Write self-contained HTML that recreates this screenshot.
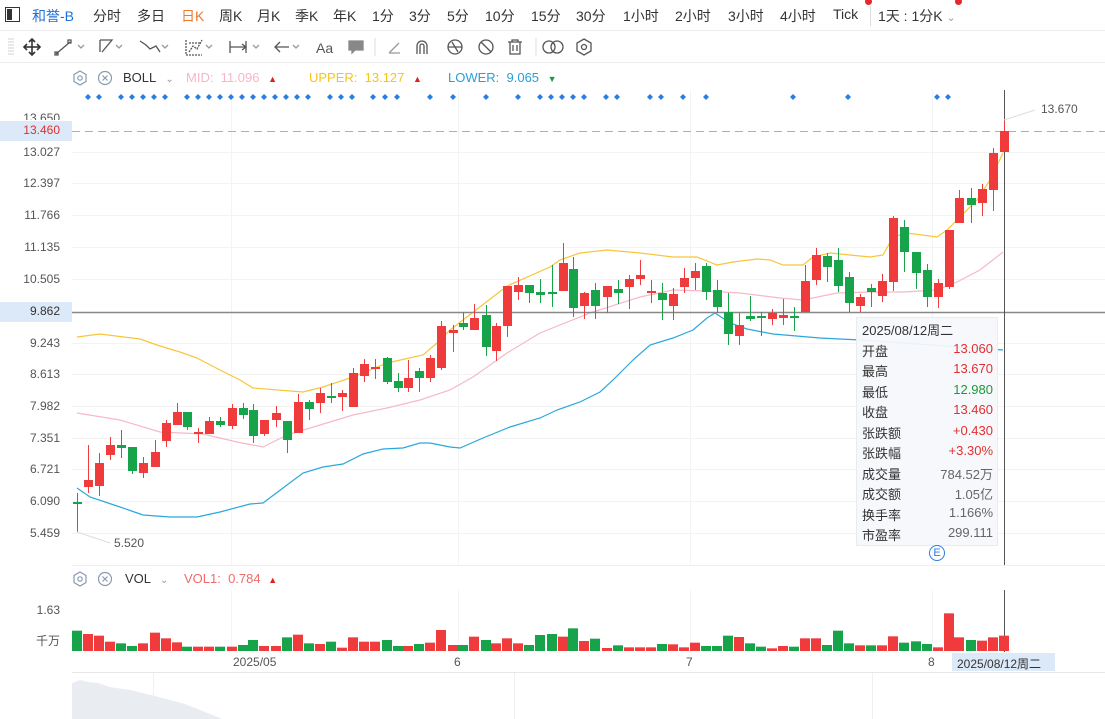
<!DOCTYPE html>
<html><head><meta charset="utf-8">
<style>
*{margin:0;padding:0;box-sizing:border-box}
body{width:1105px;height:719px;overflow:hidden;background:#fff;font-family:"Liberation Sans","Noto Sans CJK SC",sans-serif;color:#333;position:relative}
.a{position:absolute;white-space:nowrap}
.nav{font-size:14px;top:6px;color:#333}
.ax{font-size:12px;color:#555;text-align:right;width:60px;left:0}
.tt{position:absolute;left:856px;top:317px;width:142px;height:229px;background:rgba(246,248,251,0.93);border:1px solid #e8ecf1;font-size:13px}
.tt div{position:absolute;left:5px;right:4px;height:20px}
.tt span{position:absolute;right:0}
</style></head><body>
<!-- top nav -->
<div class="a" style="left:5px;top:7px;width:15px;height:15px;border:1.5px solid #333"></div>
<div class="a" style="left:7px;top:9px;width:5px;height:11px;background:#333"></div>
<div class="a nav" style="left:32px;color:#1e6fd9">和誉-B</div>
<div class="a nav" style="left:93px">分时</div>
<div class="a nav" style="left:137px">多日</div>
<div class="a nav" style="left:181px;color:#f0782d">日K</div>
<div class="a nav" style="left:219px">周K</div>
<div class="a nav" style="left:257px">月K</div>
<div class="a nav" style="left:295px">季K</div>
<div class="a nav" style="left:333px">年K</div>
<div class="a nav" style="left:372px">1分</div>
<div class="a nav" style="left:409px">3分</div>
<div class="a nav" style="left:447px">5分</div>
<div class="a nav" style="left:485px">10分</div>
<div class="a nav" style="left:531px">15分</div>
<div class="a nav" style="left:576px">30分</div>
<div class="a nav" style="left:623px">1小时</div>
<div class="a nav" style="left:675px">2小时</div>
<div class="a nav" style="left:728px">3小时</div>
<div class="a nav" style="left:780px">4小时</div>
<div class="a nav" style="left:833px">Tick</div>
<div class="a" style="left:865px;top:-2px;width:7px;height:7px;border-radius:50%;background:#e8262b"></div>
<div class="a" style="left:870px;top:6px;width:1px;height:20px;background:#ddd"></div>
<div class="a nav" style="left:878px">1天 : 1分K <span style="color:#8aa0c0;font-size:11px">⌄</span></div>
<div class="a" style="left:955px;top:-2px;width:7px;height:7px;border-radius:50%;background:#e8262b"></div>
<div class="a" style="left:0;top:30px;width:1105px;height:1px;background:#ececec"></div>
<div class="a" style="left:0;top:62px;width:1105px;height:1px;background:#ececec"></div>
<!-- toolbar -->
<svg class="a" style="left:0;top:32px" width="620" height="30" fill="none" stroke="#555" stroke-width="1.3">
<g stroke="#ddd"><line x1="8" y1="7" x2="14" y2="7"/><line x1="8" y1="10" x2="14" y2="10"/><line x1="8" y1="13" x2="14" y2="13"/><line x1="8" y1="16" x2="14" y2="16"/><line x1="8" y1="19" x2="14" y2="19"/><line x1="8" y1="22" x2="14" y2="22"/></g>
<g stroke="#333" stroke-width="1.6"><line x1="24" y1="15" x2="40" y2="15"/><line x1="32" y1="7" x2="32" y2="23"/><path d="M29 10l3-3 3 3M29 20l3 3 3-3M27 12l-3 3 3 3M37 12l3 3-3 3"/></g>
<path d="M56 22l14-12M55 20h3v3h-3zM68 8h3v3h-3z"/><path d="M78 13l3 3 3-3" stroke="#999"/>
<path d="M100 8h12l-10 12M100 8v12" /><path d="M116 13l3 3 3-3" stroke="#999"/>
<path d="M140 9l6 4 4 4 6-3 4 6"/><path d="M162 13l3 3 3-3" stroke="#999"/>
<path d="M186 8v15h16M189 20l4-6 4 3 5-9M189 11h12" stroke-dasharray="2 1"/><path d="M206 13l3 3 3-3" stroke="#999"/>
<path d="M230 9v12M246 9v12M230 15h16M242 12l4 3-4 3"/><path d="M253 13l3 3 3-3" stroke="#999"/>
<path d="M275 15h14M280 10l-5 5 5 5"/><path d="M293 13l3 3 3-3" stroke="#999"/>
<text x="316" y="21" font-size="14" fill="#555" stroke="none" font-family="Liberation Sans">Aa</text>
<path d="M349 9h14v9h-8l-3 3v-3h-3z" fill="#888" stroke="#888"/>
<line x1="375" y1="6" x2="375" y2="24" stroke="#e4e4e4"/>
<path d="M389 21l10-10M389 21h11" stroke="#999"/>
<path d="M417 22v-8a5 5 0 0110 0v8M420 22v-8a2 2 0 014 0v8"/>
<circle cx="455" cy="15" r="7"/><path d="M448 15h14M452 10l6 10"/>
<circle cx="486" cy="15" r="7"/><path d="M481 10l10 10"/>
<path d="M508 10h14M512 10V8h6v2M510 10v12h10V10M513 13v6M517 13v6"/>
<line x1="536" y1="6" x2="536" y2="24" stroke="#e4e4e4"/>
<circle cx="549" cy="15" r="6"/><circle cx="557" cy="15" r="6"/>
<path d="M584 7l7 4v8l-7 4-7-4v-8z"/><circle cx="584" cy="15" r="2.5"/>
</svg>
<!-- BOLL legend -->
<svg class="a" style="left:72px;top:70px" width="40" height="16" fill="none" stroke="#8a9bb0" stroke-width="1.2">
<path d="M8 1l6 3.5v7L8 15l-6-3.5v-7z"/><circle cx="8" cy="8" r="2.2"/><circle cx="33" cy="8" r="6.5"/><path d="M30.5 5.5l5 5M35.5 5.5l-5 5"/></svg>
<div class="a" style="left:123px;top:70px;font-size:13px">BOLL <span style="color:#999;font-size:10px;margin-left:6px">⌄</span></div>
<div class="a" style="left:186px;top:70px;font-size:13px;color:#f7b6c8">MID:&nbsp; 11.096 <span style="color:#e02020;font-size:9px;margin-left:5px">▲</span></div>
<div class="a" style="left:309px;top:70px;font-size:13px;color:#f5c518">UPPER:&nbsp; 13.127 <span style="color:#e02020;font-size:9px;margin-left:5px">▲</span></div>
<div class="a" style="left:448px;top:70px;font-size:13px;color:#2a9fd6">LOWER:&nbsp; 9.065 <span style="color:#1a9a3a;font-size:9px;margin-left:5px">▼</span></div>
<!-- axis labels -->
<div class="a ax" style="top:111px;height:9px;overflow:hidden">13.650</div>
<div class="a" style="left:0;top:121px;width:72px;height:20px;background:#dce9f8"></div>
<div class="a ax" style="top:123px;color:#e0302f">13.460</div>
<div class="a ax" style="top:145px">13.027</div>
<div class="a ax" style="top:176px">12.397</div>
<div class="a ax" style="top:208px">11.766</div>
<div class="a ax" style="top:240px">11.135</div>
<div class="a ax" style="top:272px">10.505</div>
<div class="a" style="left:0;top:302px;width:72px;height:20px;background:#dce9f8"></div>
<div class="a ax" style="top:304px;color:#333">9.862</div>
<div class="a ax" style="top:336px">9.243</div>
<div class="a ax" style="top:367px">8.613</div>
<div class="a ax" style="top:399px">7.982</div>
<div class="a ax" style="top:431px">7.351</div>
<div class="a ax" style="top:462px">6.721</div>
<div class="a ax" style="top:494px">6.090</div>
<div class="a ax" style="top:526px">5.459</div>
<svg id="main" class="a" style="left:0;top:0" width="1105" height="719"></svg>
<div class="a" style="left:1041px;top:102px;font-size:12px;color:#555">13.670</div>
<div class="a" style="left:114px;top:536px;font-size:12px;color:#555">5.520</div>
<!-- tooltip -->
<div class="tt">
<div style="top:2px">2025/08/12周二</div>
<div style="top:23px">开盘<span style="color:#e0302f">13.060</span></div>
<div style="top:43px">最高<span style="color:#e0302f">13.670</span></div>
<div style="top:64px">最低<span style="color:#1a9a3a">12.980</span></div>
<div style="top:84px">收盘<span style="color:#e0302f">13.460</span></div>
<div style="top:105px">张跌额<span style="color:#e0302f">+0.430</span></div>
<div style="top:125px">张跌幅<span style="color:#e0302f">+3.30%</span></div>
<div style="top:146px">成交量<span style="color:#666">784.52万</span></div>
<div style="top:166px">成交额<span style="color:#666">1.05亿</span></div>
<div style="top:187px">换手率<span style="color:#666">1.166%</span></div>
<div style="top:207px">市盈率<span style="color:#666">299.111</span></div>
</div>
<div class="a" style="left:929px;top:545px;width:16px;height:16px;border:1.3px solid #2a7de1;border-radius:50%;color:#2a7de1;font-size:11px;text-align:center;line-height:14px">E</div>
<!-- VOL legend -->
<svg class="a" style="left:72px;top:571px" width="40" height="16" fill="none" stroke="#8a9bb0" stroke-width="1.2">
<path d="M8 1l6 3.5v7L8 15l-6-3.5v-7z"/><circle cx="8" cy="8" r="2.2"/><circle cx="33" cy="8" r="6.5"/><path d="M30.5 5.5l5 5M35.5 5.5l-5 5"/></svg>
<div class="a" style="left:125px;top:571px;font-size:13px">VOL <span style="color:#999;font-size:10px;margin-left:6px">⌄</span></div>
<div class="a" style="left:184px;top:571px;font-size:13px;color:#f06b6b">VOL1:&nbsp; 0.784 <span style="color:#e02020;font-size:9px;margin-left:4px">▲</span></div>
<div class="a ax" style="top:603px">1.63</div>
<div class="a ax" style="top:632px">千万</div>
<div class="a" style="left:233px;top:655px;font-size:12px;color:#555">2025/05</div>
<div class="a" style="left:454px;top:655px;font-size:12px;color:#555">6</div>
<div class="a" style="left:686px;top:655px;font-size:12px;color:#555">7</div>
<div class="a" style="left:928px;top:655px;font-size:12px;color:#555">8</div>
<div class="a" style="left:952px;top:653px;width:103px;height:18px;background:#dce9f8;font-size:12px;color:#333;padding:2px 0 0 5px">2025/08/12周二</div>
<script>
var s=document.getElementById('main'),h='';
function L(x1,y1,x2,y2,c,w,d){h+='<line x1="'+x1+'" y1="'+y1+'" x2="'+x2+'" y2="'+y2+'" stroke="'+c+'" stroke-width="'+(w||1)+'"'+(d?' stroke-dasharray="'+d+'"':'')+'/>';}
[152,183,215,247,279,343,374,406,438,469,501,533].forEach(function(y){L(72,y+.5,1105,y+.5,'#f3f3f3');});
[231,458,690,932].forEach(function(x){L(x+.5,90,x+.5,565,'#f4f4f4');L(x+.5,590,x+.5,652,'#f4f4f4');});
L(72,565.5,1105,565.5,'#eee');L(72,672.5,1105,672.5,'#e8e8e8');
[153,514,872].forEach(function(x){L(x+.5,673,x+.5,719,'#eef0f3');});
h+='<path d="M72 719V683l8-3 8 2 10 1 12 4 20 3 25 6 30 8 30 12 15 6z" fill="#e9edf2"/>';
var dots=[88,99,121,132,143,154,165,187,198,209,220,231,242,253,264,275,286,297,308,330,341,352,373,385,397,430,453,486,518,540,551,562,573,584,606,617,650,661,683,706,793,848,937,948];
dots.forEach(function(x){h+='<path d="M'+x+' 94l3 3-3 3-3-3z" fill="#2a7de1"/>';});
L(72,131.5,1105,131.5,'#f0a050',1,'8 5');
function P(pts,c){h+='<polyline fill="none" stroke="'+c+'" stroke-width="1.2" points="'+pts+'"/>';}
P("77,337 100,334 140,339 157,345 180,352 197,358 220,370 240,380 253,388 303,392 323,387 353,377 387,363 423,355 437,343 450,330 507,286 550,267 560,260 580,253 607,250 640,253 673,257 697,257 717,265 733,262 757,259 770,260 783,265 803,265 813,257 830,253 850,255 870,257 883,255 893,237 907,233 937,237 947,230 957,220 977,200 990,180 1003,153",'#f8c53a');
P("77,413 120,420 160,432 203,434 237,442 263,447 287,435 320,425 353,415 387,408 420,400 450,390 473,377 507,353 540,333 590,313 640,297 673,290 707,291 740,293 780,298 803,300 837,293 870,292 903,292 937,290 957,282 980,270 1003,252",'#f6b9c6');
P("77,488 90,497 120,507 143,515 170,517 197,517 220,512 250,504 263,503 283,488 303,473 323,467 343,464 363,454 383,449 403,448 420,443 430,443 450,447 460,448 483,438 510,427 540,418 557,410 580,402 600,392 613,380 633,360 650,345 673,338 693,330 707,318 715,313 730,323 747,329 773,334 820,338 860,340 1003,350",'#2aa8dc');
L(72,312.5,1105,312.5,'#888',1.5);
var C=[[77,502,503,493,532,0],[88,480,487,445,493,1],[99,463,486,453,496,1],[110,445,455,437,460,1],[121,445,448,430,458,0],[132,447,471,447,474,0],[143,463,473,457,478,1],[155,452,467,440,467,1],[166,423,441,420,447,1],[177,412,425,403,425,1],[187,412,427,412,430,0],[198,432,434,428,443,1],[209,421,434,417,434,1],[220,421,425,417,427,0],[232,408,426,404,429,1],[243,408,415,403,419,0],[253,410,436,404,443,0],[264,420,434,420,436,1],[276,413,420,406,427,1],[287,421,440,421,453,0],[298,402,433,394,433,1],[309,402,409,400,420,0],[320,393,403,388,413,1],[331,396,398,383,403,0],[342,393,397,390,411,1],[353,373,407,368,407,1],[364,364,376,359,382,1],[375,367,369,359,379,1],[387,358,382,357,384,0],[398,381,388,373,392,0],[408,378,388,360,392,1],[419,371,378,368,392,0],[430,358,378,355,382,1],[441,326,368,321,370,1],[453,330,333,325,352,1],[463,323,327,312,330,0],[474,318,330,304,330,1],[486,315,347,305,356,0],[496,326,351,323,361,1],[507,286,326,286,337,1],[518,285,292,277,300,1],[529,285,293,285,303,0],[540,292,295,279,303,0],[552,292,293,265,307,0],[563,263,291,243,291,1],[573,269,308,257,317,0],[584,293,306,292,319,1],[595,290,306,283,319,0],[607,286,297,286,313,1],[618,289,293,280,304,0],[629,279,287,275,309,1],[640,275,279,260,285,1],[651,291,293,280,303,1],[662,293,300,283,320,0],[673,294,306,288,320,1],[684,278,287,268,293,1],[695,271,278,263,290,1],[706,266,292,263,300,0],[717,290,307,280,313,0],[728,312,334,293,345,0],[739,325,336,313,345,1],[750,316,319,296,321,0],[761,316,317,312,336,0],[772,313,319,309,325,1],[783,315,318,299,325,1],[794,316,317,307,331,0],[805,281,312,265,312,1],[816,255,280,248,285,1],[827,256,267,253,282,0],[838,260,286,248,292,0],[849,277,303,272,312,0],[860,297,306,294,312,1],[871,288,292,284,307,0],[882,281,296,274,302,1],[893,218,282,216,291,1],[904,227,252,220,272,0],[916,252,273,252,289,0],[927,270,297,264,307,0],[938,283,297,279,308,1],[949,230,287,230,289,1],[959,198,223,190,223,1],[971,198,205,188,223,0],[982,189,203,184,216,1],[993,153,190,148,211,1],[1004,131,152,120,152,1]];
var V=[212,222,227,245,250,258,250,218,235,247,260,260,260,260,260,255,240,258,258,232,224,250,252,245,263,232,245,245,240,258,258,252,248,210,255,255,230,240,250,235,250,255,225,222,230,205,243,236,264,256,262,262,262,252,253,262,248,258,258,227,231,250,260,265,258,260,235,235,255,212,250,256,256,256,229,248,244,252,262,160,232,240,242,232,227];
L(1004.5,90,1004.5,565,'#555');L(1004.5,590,1004.5,652,'#555');
C.forEach(function(c,i){var col=c[5]?'#ef3b3b':'#17a34a';
L(c[0]+.5,c[3],c[0]+.5,c[4],col);
var t=Math.min(c[1],c[2]),b=Math.max(c[1],c[2]);if(b-t<2)b=t+2;
h+='<rect x="'+(c[0]-4)+'" y="'+t+'" width="9" height="'+(b-t)+'" fill="'+col+'"/>';
var vy=560+V[i]/3;h+='<rect x="'+(c[0]-5)+'" y="'+vy+'" width="10" height="'+(651-vy)+'" fill="'+col+'"/>';});
L(1004,120,1035,110,'#ddd');L(77,532,110,543,'#ddd');
s.innerHTML=h;
</script>
</body></html>
